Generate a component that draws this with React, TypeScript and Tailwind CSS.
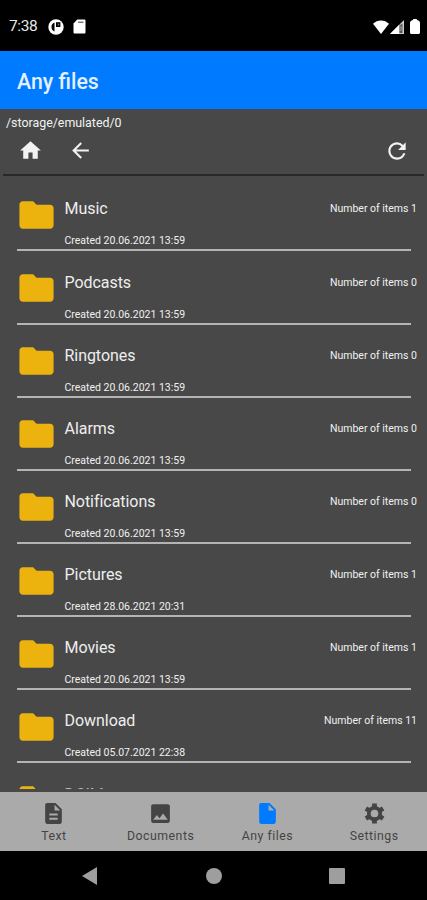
import type { IconType } from 'react-icons';
import {
  MdArrowBack,
  MdDescription,
  MdFolder,
  MdHome,
  MdImage,
  MdInsertDriveFile,
  MdRefresh,
} from 'react-icons/md';

const folders = [
  { name: 'Music', created: '20.06.2021 13:59', items: 1 },
  { name: 'Podcasts', created: '20.06.2021 13:59', items: 0 },
  { name: 'Ringtones', created: '20.06.2021 13:59', items: 0 },
  { name: 'Alarms', created: '20.06.2021 13:59', items: 0 },
  { name: 'Notifications', created: '20.06.2021 13:59', items: 0 },
  { name: 'Pictures', created: '28.06.2021 20:31', items: 1 },
  { name: 'Movies', created: '20.06.2021 13:59', items: 1 },
  { name: 'Download', created: '05.07.2021 22:38', items: 11 },
];

const tabs: { label: string; icon: IconType | typeof GearIcon; active?: boolean }[] = [
  { label: 'Text', icon: MdDescription },
  { label: 'Documents', icon: MdImage },
  { label: 'Any files', icon: MdInsertDriveFile, active: true },
  { label: 'Settings', icon: GearIcon },
];

function GearIcon({ className }: { className?: string }) {
  return (
    <svg className={className} viewBox="0 0 24 24" fill="none" stroke="currentColor">
      <circle cx="12" cy="12" r="5.5" strokeWidth="3.6" />
      <path
        d="M12 2.400v3.400M12 18.200v3.400M3.700 7.200l2.900 1.700M17.400 15.100l2.900 1.700M3.700 16.800l2.900-1.700M17.400 8.900l2.900-1.700"
        strokeWidth="4.6"
      />
    </svg>
  );
}

function StatusBar() {
  return (
    <div className="flex h-[51px] shrink-0 items-center bg-black pt-[2px] pl-[9px] pr-[7px] text-white">
      <span className="w-[39px] pt-[1px] text-[15.500px] leading-none tracking-[-0.4px] text-[#e8e8e8]">7:38</span>
      <svg className="h-4 w-4" viewBox="0 0 16 16">
        <circle cx="8" cy="8" r="7.700" fill="#fff" />
        <path d="M6.500 3.400a5 5 0 0 0 0 9.200z" fill="#000" />
        <path d="M8 3.200h4.400v4.800H8z" fill="#000" />
        <path d="M9.800 4.600h1.400v1.800H9.800z" fill="#777" />
      </svg>
      <svg className="ml-[9px] h-[15px] w-[13px]" viewBox="0 0 13 15">
        <path d="M4.300.5h6.900c.8 0 1.300.5 1.300 1.300v11.400c0 .8-.5 1.300-1.300 1.300H1.800c-.8 0-1.300-.5-1.300-1.300V4.500z" fill="#fff" />
        <path d="M5 2.600h5.500v1.300H5z" fill="#666" />
      </svg>
      <svg className="ml-auto h-[14px] w-4" viewBox="0 0 16 14">
        <path d="M8 14 0 3.800C2.200 1.600 5 .4 8 .4s5.800 1.200 8 3.400z" fill="#fff" />
      </svg>
      <svg className="ml-[1px] h-[14px] w-[14px]" viewBox="0 0 14 14">
        <path d="M14 0v14H0z" fill="#ccc" />
        <path d="M9 5v9H0z" fill="#fff" />
        <path d="M9.500 5.500 12.500 3.500V13h-3z" fill="#555" />
        <path d="M11 6v5" stroke="#aaa" />
      </svg>
      <svg className="ml-[6px] h-[15px] w-[10px]" viewBox="0 0 10 15">
        <path d="M3.500 0h3l1 1.200C9 1.500 10 2.500 10 4v9.500c0 .8-.7 1.500-1.500 1.500h-7C.7 15 0 14.300 0 13.500V4c0-1.500 1-2.500 2.500-2.800z" fill="#fff" />
      </svg>
    </div>
  );
}

function FolderRow({ name, created, items }: { name: string; created: string; items: number }) {
  return (
    <div className="flex h-[73.150px] shrink-0 flex-col pl-[15.500px] pr-[10px]">
      <div className="flex h-[71px] shrink-0">
        <MdFolder className="mt-[15.500px] h-[42px] w-[41px] shrink-0 text-[#ecb30e]" />
        <div className="flex flex-1 flex-col pl-2 pt-[21px]">
          <div className="flex justify-between">
            <span className="text-[16px] leading-[19px] tracking-[-0.05px] text-[#eeeeee]">{name}</span>
            <span className="pt-[2px] text-[10.500px] leading-[15px] text-[#f0f0f0]">Number of items {items}</span>
          </div>
          <span className="mt-[16px] text-[10.500px] leading-[14px] text-[#f0f0f0]">Created {created}</span>
        </div>
      </div>
      <div className="ml-[1.500px] mr-[6px] h-[2px] shrink-0 bg-[#b4b4b4]" />
    </div>
  );
}

export default function App() {
  return (
    <div className="flex h-[900px] w-[427px] flex-col overflow-hidden bg-[#484848] font-[Roboto,sans-serif]">
      <StatusBar />
      <header className="flex h-[58px] shrink-0 items-center bg-[#007bff] pl-[17px] pt-[3px]">
        <h1 className="text-[21.300px] font-medium leading-none text-[#e4f0ff]">Any files</h1>
      </header>

      {/* Path and navigation */}
      <div className="mx-[3px] h-[67px] shrink-0 border-b-2 border-[#292929] pt-[7px] text-[#f2f2f2]">
        <p className="pl-[3px] text-[12.400px] leading-[14px]">/storage/emulated/0</p>
        <div className="flex pl-[15px] pr-[14px] pt-[8.400px]">
          <MdHome className="h-[25px] w-[25px]" />
          <MdArrowBack className="ml-[25px] h-[25px] w-[25px]" />
          <MdRefresh className="ml-auto h-[26px] w-[26px]" />
        </div>
      </div>

      {/* File list */}
      <main className="flex min-h-0 flex-1 flex-col overflow-hidden pt-[2.400px]">
        {folders.map((folder) => (
          <FolderRow key={folder.name} {...folder} />
        ))}
        {/* Row scrolled under the tab bar */}
        <div className="flex pl-[15.500px]">
          <MdFolder className="mt-[15px] h-[42px] w-[41px] shrink-0 text-[#ecb30e]" />
          <span className="pl-2 pt-[21px] text-[16px] leading-[19px] text-[#bbbbbb]">DCIM</span>
        </div>
      </main>
      <div className="h-[3px] shrink-0 bg-[#484848]" />

      <nav className="grid h-[59px] shrink-0 grid-cols-4 bg-[#aaaaaa]">
        {tabs.map(({ label, icon: Icon, active }) => (
          <div key={label} className="flex flex-col items-center pl-[1px] pt-[9px] text-[#444444]">
            <Icon className={active ? 'h-[25px] w-[25px] text-[#007bff]' : 'h-[25px] w-[25px]'} />
            <span className="mt-[3px] text-[12.300px] leading-[14px] tracking-[0.5px]">{label}</span>
          </div>
        ))}
      </nav>

      {/* System buttons */}
      <div className="flex h-[49px] shrink-0 items-center bg-black pl-[82px] text-[#9e9e9e]">
        <svg className="h-[18px] w-[15px]" viewBox="0 0 15 18">
          <path d="M15 0v18L0 9z" fill="currentColor" />
        </svg>
        <div className="ml-[109px] h-4 w-4 rounded-full bg-[#9e9e9e]" />
        <div className="ml-[107px] h-4 w-4 rounded-[1px] bg-[#9e9e9e]" />
      </div>
    </div>
  );
}
